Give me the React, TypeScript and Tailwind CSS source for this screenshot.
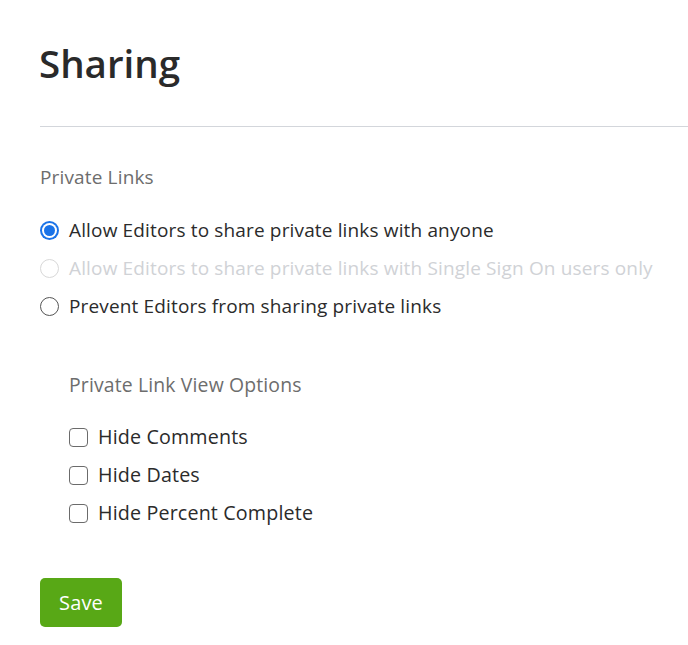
import React from "react";

function Radio({ checked, disabled }: { checked?: boolean; disabled?: boolean }) {
  if (checked) {
    return (
      <span className="flex h-[19px] w-[19px] shrink-0 items-center justify-center rounded-full bg-[#1a73e8]">
        <span className="flex h-[15px] w-[15px] items-center justify-center rounded-full bg-white">
          <span className="h-[11px] w-[11px] rounded-full bg-[#1a73e8]" />
        </span>
      </span>
    );
  }
  return (
    <span
      className={
        "h-[19px] w-[19px] shrink-0 rounded-full border bg-white " +
        (disabled ? "border-[#d8d8d8]" : "border-[#555555]")
      }
    />
  );
}

function Checkbox() {
  return <span className="h-[19px] w-[19px] shrink-0 rounded-[4px] border border-[#6b6b6b] bg-white" />;
}

export default function App() {
  return (
    <div
      className="min-h-[645px] bg-white pt-[38px] text-[#2b2b2b]"
      style={{ fontFamily: "'Open Sans', Lato, sans-serif" }}
    >
      <h1 className="pl-[39px] text-[38.5px] font-semibold leading-[50px] text-[#2a2a2a]">Sharing</h1>
      <div className="ml-[40px] mt-[38px] h-px bg-[#d3d6db]" />
      <div className="px-[40px] pt-[38px] tracking-[0.15px]">
        <div className="text-[19px] leading-[24px] text-[#6d6d6d]">Private Links</div>
        <div className="mt-[29px] flex flex-col gap-[14px]">
          <label className="flex h-[24px] items-center gap-[10px] whitespace-nowrap text-[19px]">
            <Radio checked />
            <span>Allow Editors to share private links with anyone</span>
          </label>
          <label className="flex h-[24px] items-center gap-[10px] whitespace-nowrap text-[19px] text-[#d0d2d6]">
            <Radio disabled />
            <span>Allow Editors to share private links with Single Sign On users only</span>
          </label>
          <label className="flex h-[24px] items-center gap-[10px] whitespace-nowrap text-[19px]">
            <Radio />
            <span>Prevent Editors from sharing private links</span>
          </label>
        </div>
        <div className="pl-[29px] pt-[55px]">
          <div className="text-[19.4px] leading-[24px] text-[#6d6d6d]">Private Link View Options</div>
          <div className="mt-[28px] flex flex-col gap-[14px]">
            {["Hide Comments", "Hide Dates", "Hide Percent Complete"].map((t) => (
              <label key={t} className="flex h-[24px] items-center gap-[10px] whitespace-nowrap text-[19.7px]">
                <Checkbox />
                <span>{t}</span>
              </label>
            ))}
          </div>
        </div>
        <button className="mt-[53px] h-[49px] w-[82px] rounded-[5px] bg-[#58a816] text-[20px] text-white">
          Save
        </button>
      </div>
    </div>
  );
}
